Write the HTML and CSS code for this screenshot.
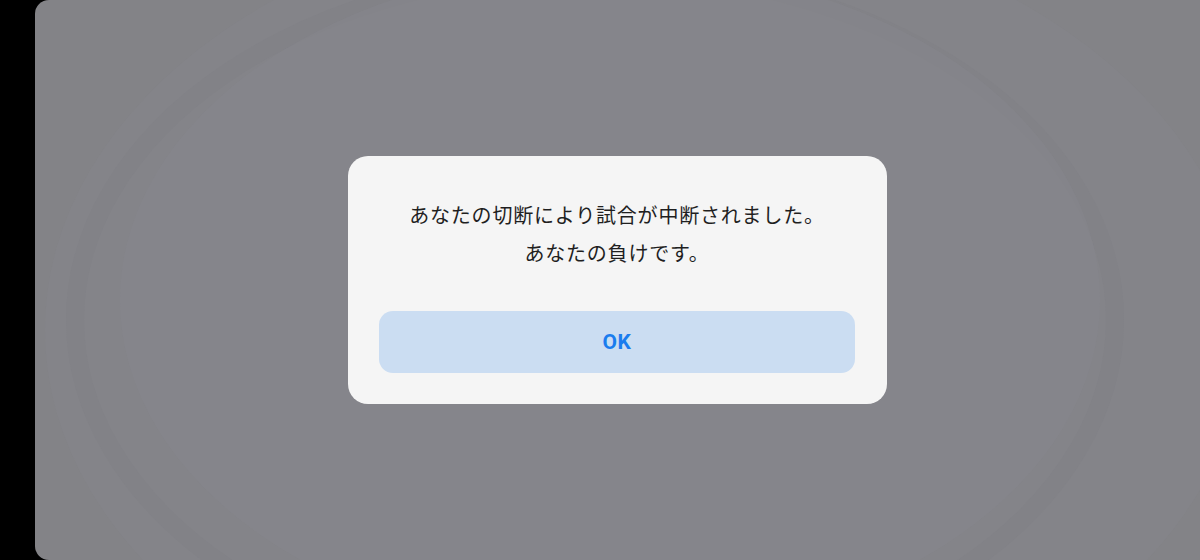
FILE: index.html
```html
<!DOCTYPE html>
<html lang="ja">
<head>
<meta charset="utf-8">
<link rel="stylesheet" href="styles.css">
</head>
<body>
<div class="frame">
  <div class="screen">
    <svg class="bg" viewBox="0 0 1165 560" preserveAspectRatio="none" aria-hidden="true">
      <ellipse cx="610" cy="330" rx="600" ry="420" fill="#86868b" opacity="0.5"/>
      <ellipse cx="560" cy="320" rx="520" ry="350" fill="none" stroke="#7f7f84" stroke-width="18" opacity="0.35"/>
      <ellipse cx="575" cy="300" rx="490" ry="335" fill="#88888d" opacity="0.45"/>
    </svg>
    <div class="dialog">
      <p class="msg">あなたの切断により試合が中断されました。<br>あなたの負けです。</p>
      <button class="ok">OK</button>
    </div>
  </div>
</div>
</body>
</html>
```
FILE: styles.css
```css
html, body {
  margin: 0;
  padding: 0;
  background: #000;
  width: 1200px;
  height: 560px;
  overflow: hidden;
}
.frame {
  display: flex;
  width: 1200px;
  height: 560px;
  padding-left: 35px;
  box-sizing: border-box;
}
.screen {
  position: relative;
  flex: 1;
  height: 560px;
  background: #838387;
  border-radius: 14px 0 0 14px;
  overflow: hidden;
  display: flex;
  align-items: flex-start;
  justify-content: center;
}
.bg {
  position: absolute;
  inset: 0;
  width: 100%;
  height: 100%;
}
.dialog {
  position: relative;
  margin-top: 156px;
  width: 539px;
  box-sizing: border-box;
  background: #f5f5f5;
  border-radius: 20px;
  padding: 40px 32px 31px 31px;
  display: flex;
  flex-direction: column;
  align-items: stretch;
}
.msg {
  margin: 0;
  text-align: center;
  font-family: "Noto Sans CJK JP", "Noto Sans", sans-serif;
  font-size: 20px;
  letter-spacing: 0.8px;
  line-height: 38px;
  color: #1f1f1f;
}
.ok {
  margin-top: 39px;
  height: 62px;
  border: none;
  border-radius: 14px;
  background: #cbddf2;
  color: #1a7cee;
  font-family: Roboto, "Noto Sans", sans-serif;
  font-weight: 700;
  font-size: 21px;
  letter-spacing: 0.5px;
  padding: 0;
}
```
